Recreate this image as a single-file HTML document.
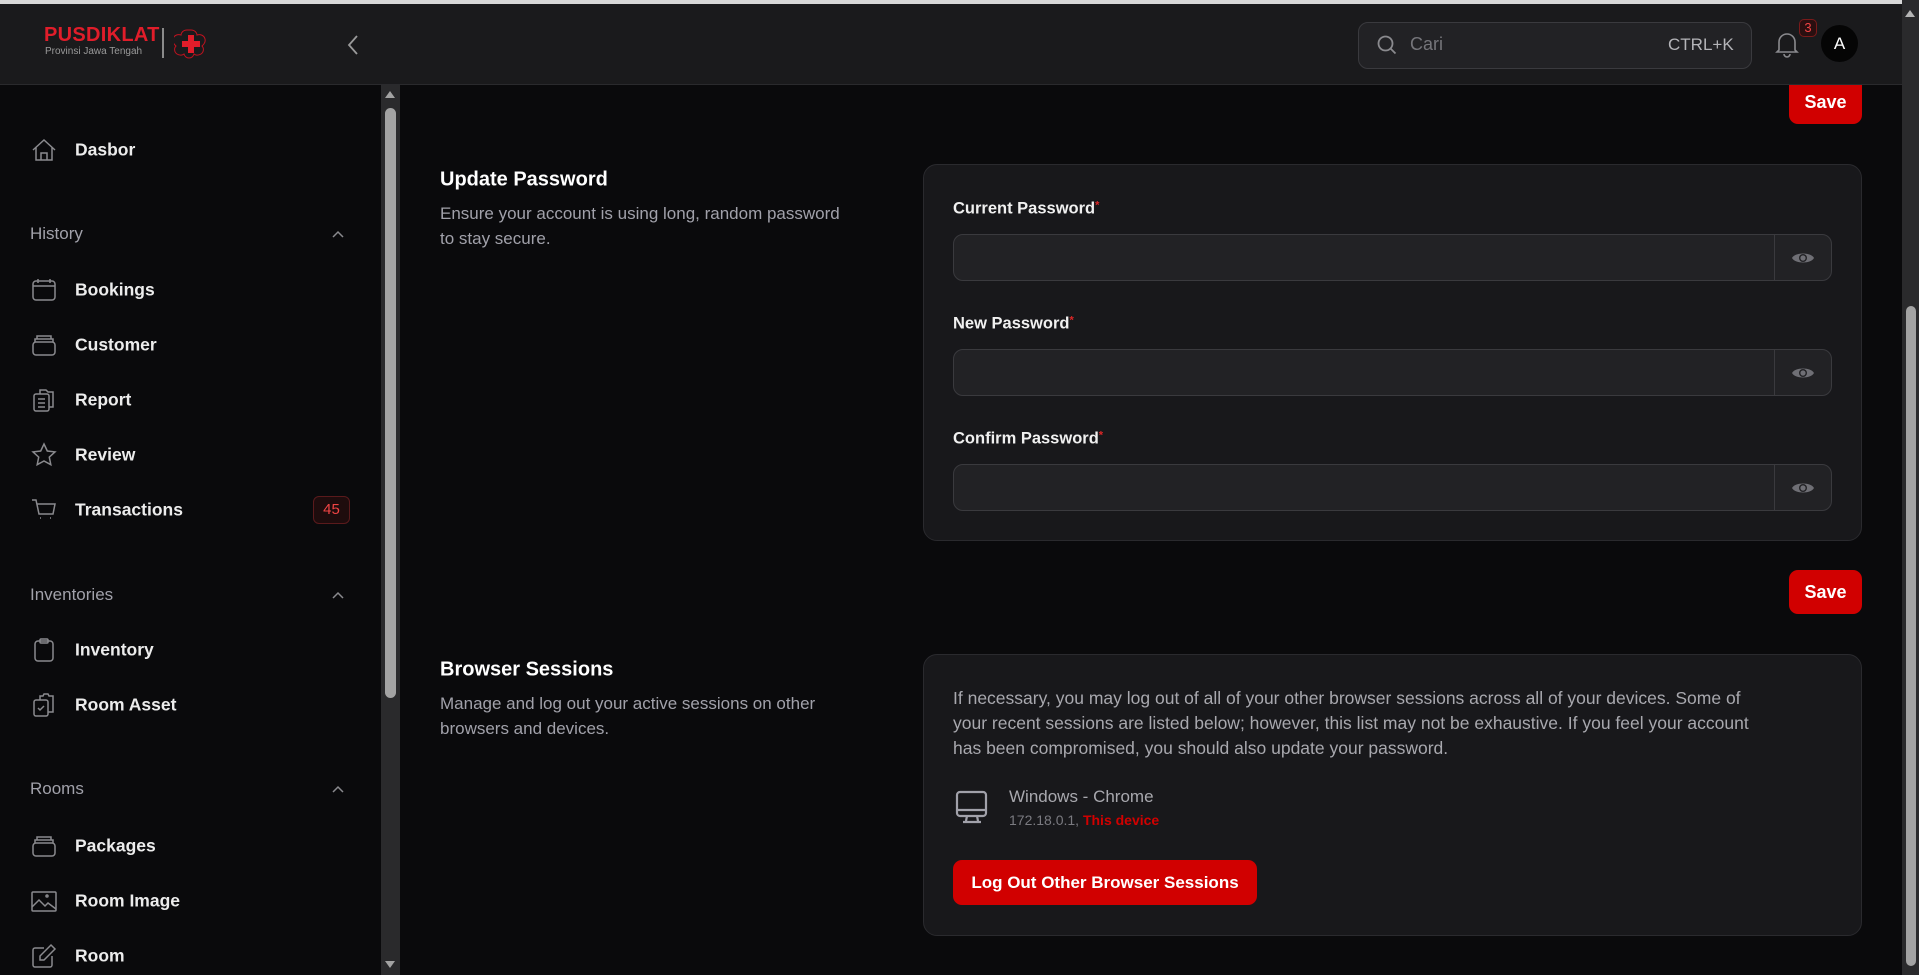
<!DOCTYPE html>
<html><head><meta charset="utf-8"><style>
*{box-sizing:border-box;margin:0;padding:0}
body{width:1919px;height:975px;background:#0a0a0c;font-family:"Liberation Sans",sans-serif;position:relative;overflow:hidden;color:#e5e5e5}
.a{position:absolute}
.topline{left:0;top:0;width:1919px;height:4px;background:#d8d8d8}
.hdr{left:0;top:4px;width:1902px;height:81px;background:#1a1a1c;border-bottom:1px solid #2a2a2d}
.it{position:absolute;left:75px;font-size:17.5px;font-weight:bold;color:#ececec;transform:translateY(-50%)}
.ic{position:absolute;left:31px;width:26px;height:26px;transform:translateY(-50%)}
.sec{position:absolute;left:30px;font-size:17px;color:#a1a1aa;transform:translateY(-50%)}
.chev{position:absolute;left:330px;width:16px;height:16px;transform:translateY(-50%)}
.card{background:#18181b;border:1px solid #2a2a2e;border-radius:14px}
.lbl{position:absolute;left:953px;font-size:16.5px;font-weight:bold;color:#f0f0f0;transform:translateY(-50%)}
.lbl span{color:#dc2626;font-size:11px;vertical-align:top}
.inp{position:absolute;left:953px;width:879px;height:47px;background:#222225;border:1px solid #3a3a3e;border-radius:10px;overflow:hidden}
.inp .eye{position:absolute;right:0;top:0;width:57px;height:100%;border-left:1px solid #3a3a3e;display:flex;align-items:center;justify-content:center}
.btn{position:absolute;background:#d10000;color:#fff;font-weight:bold;font-size:18px;border-radius:9px;display:flex;align-items:center;justify-content:center}
.ttl{position:absolute;left:440px;font-size:20px;font-weight:bold;color:#fff;transform:translateY(-50%)}
.desc{position:absolute;left:440px;font-size:17px;line-height:25px;color:#a1a1aa;white-space:nowrap}
</style></head><body>
<div class="a topline"></div>
<div class="btn" style="left:1789px;top:80px;width:73px;height:44px;border-radius:0 0 9px 9px">Save</div>
<div class="a hdr"></div>
<div class="a" style="left:44px;top:24px;font-size:20px;font-weight:bold;color:#e11d2a;letter-spacing:0.3px">PUSDIKLAT</div>
<div class="a" style="left:45px;top:46px;font-size:10px;color:#9a9a9a">Provinsi Jawa Tengah</div>
<div class="a" style="left:162px;top:28px;width:2px;height:30px;background:#8a8a8a"></div>
<svg class="a" style="left:174px;top:27px" width="34" height="34" viewBox="0 0 34 34"><path d="M17 3c4 0 6 3 6 5 3-1 7 0 8 4s-2 6-3 7c2 2 2 6-1 8s-6 1-7 0c-1 3-3 4-5 4s-4-1-5-4c-1 1-4 2-7 0s-3-6-1-8c-1-1-4-3-3-7s5-5 8-4c0-2 2-5 6-5z" fill="none" stroke="#c1121f" stroke-width="1"/><path d="M14 8h6v6h6v6h-6v6h-6v-6h-6v-6h6z" fill="#e11d2a"/></svg>
<svg class="a" style="left:346px;top:34px" width="14" height="22" viewBox="0 0 14 22"><path d="M11 2L3 11l8 9" fill="none" stroke="#9a9a9a" stroke-width="1.8"/></svg>
<div class="a" style="left:1358px;top:22px;width:394px;height:47px;background:#222225;border:1px solid #3a3a3e;border-radius:10px"></div>
<svg class="a" style="left:1376px;top:34px" width="22" height="22" viewBox="0 0 22 22"><circle cx="9.5" cy="9.5" r="7" fill="none" stroke="#8a8a8e" stroke-width="1.8"/><path d="M14.5 14.5l5 5" stroke="#8a8a8e" stroke-width="1.8"/></svg>
<div class="a" style="left:1410px;top:34px;font-size:18px;color:#75757a">Cari</div>
<div class="a" style="left:1668px;top:35px;font-size:17px;color:#b4b4b8">CTRL+K</div>
<svg class="a" style="left:1774px;top:30px" width="26" height="28" viewBox="0 0 26 28"><path d="M5 20V12a8 8 0 0116 0v8l2 2H3z" fill="none" stroke="#8a8a8e" stroke-width="1.6"/><path d="M10 24a3 3 0 006 0" fill="none" stroke="#8a8a8e" stroke-width="1.6"/></svg>
<div class="a" style="left:1799px;top:19px;width:18px;height:18px;border:1px solid #7a1a1a;background:#2a0f10;border-radius:5px;color:#ef4444;font-size:13px;text-align:center;line-height:16px">3</div>
<div class="a" style="left:1821px;top:25px;width:37px;height:37px;border-radius:50%;background:#050505;color:#fff;font-size:17px;text-align:center;line-height:37px">A</div>

<svg class="ic" style="top:150px" viewBox="0 0 26 26" fill="none" stroke="#8a8a8e" stroke-width="1.5"><path d="M2 13L13 3l11 10M5 10v13h16V10M10 23v-7h6v7"/></svg>
<div class="it" style="top:150px">Dasbor</div>
<div class="sec" style="top:234px">History</div>
<svg class="chev" style="top:234px" viewBox="0 0 16 16"><path d="M3 11l5-5 5 5" fill="none" stroke="#8a8a8e" stroke-width="1.5"/></svg>
<svg class="ic" style="top:290px" viewBox="0 0 26 26" fill="none" stroke="#8a8a8e" stroke-width="1.5"><rect x="2" y="4" width="22" height="19" rx="3"/><path d="M2 9h22M7 2v4M19 2v4"/></svg>
<div class="it" style="top:290px">Bookings</div>
<svg class="ic" style="top:345px" viewBox="0 0 26 26" fill="none" stroke="#8a8a8e" stroke-width="1.5"><rect x="2" y="10" width="22" height="13" rx="3"/><path d="M4 10V7h18v3M6 7V4h14v3"/></svg>
<div class="it" style="top:345px">Customer</div>
<svg class="ic" style="top:400px" viewBox="0 0 26 26" fill="none" stroke="#8a8a8e" stroke-width="1.5"><rect x="3" y="7" width="15" height="17" rx="2"/><path d="M9 7V3h6l2 2h5v15h-4M7 12h7M7 16h7M7 20h7"/></svg>
<div class="it" style="top:400px">Report</div>
<svg class="ic" style="top:455px" viewBox="0 0 26 26" fill="none" stroke="#8a8a8e" stroke-width="1.5"><path d="M13 2l3.3 7 7.7.9-5.7 5.2 1.5 7.6L13 19l-6.8 3.7 1.5-7.6L2 9.9 9.7 9z"/></svg>
<div class="it" style="top:455px">Review</div>
<svg class="ic" style="top:510px" viewBox="0 0 26 26" fill="none" stroke="#8a8a8e" stroke-width="1.5"><path d="M1 3h4l3 14h14l2-10H6M9 21h1M19 21h1"/></svg>
<div class="it" style="top:510px">Transactions</div>
<div class="a" style="left:313px;top:496px;width:37px;height:28px;border:1px solid #5a1a1c;background:#1e0c0d;border-radius:6px;color:#ef4444;font-size:15px;text-align:center;line-height:26px">45</div>
<div class="sec" style="top:595px">Inventories</div>
<svg class="chev" style="top:595px" viewBox="0 0 16 16"><path d="M3 11l5-5 5 5" fill="none" stroke="#8a8a8e" stroke-width="1.5"/></svg>
<svg class="ic" style="top:650px" viewBox="0 0 26 26" fill="none" stroke="#8a8a8e" stroke-width="1.5"><rect x="4" y="4" width="18" height="20" rx="3"/><rect x="9" y="2" width="8" height="4" rx="1"/></svg>
<div class="it" style="top:650px">Inventory</div>
<svg class="ic" style="top:705px" viewBox="0 0 26 26" fill="none" stroke="#8a8a8e" stroke-width="1.5"><rect x="3" y="8" width="14" height="16" rx="2"/><path d="M9 8V4h3l1-2h4l1 2h4v16h-5M7 16l2 2 4-4"/></svg>
<div class="it" style="top:705px">Room Asset</div>
<div class="sec" style="top:789px">Rooms</div>
<svg class="chev" style="top:789px" viewBox="0 0 16 16"><path d="M3 11l5-5 5 5" fill="none" stroke="#8a8a8e" stroke-width="1.5"/></svg>
<svg class="ic" style="top:846px" viewBox="0 0 26 26" fill="none" stroke="#8a8a8e" stroke-width="1.5"><rect x="2" y="10" width="22" height="13" rx="3"/><path d="M4 10V7h18v3M6 7V4h14v3"/></svg>
<div class="it" style="top:846px">Packages</div>
<svg class="ic" style="top:901px" viewBox="0 0 26 26" fill="none" stroke="#8a8a8e" stroke-width="1.5"><rect x="1" y="4" width="24" height="19" rx="1"/><path d="M1 19l7-7 6 6 3-3 8 6"/><circle cx="16" cy="8" r="1"/></svg>
<div class="it" style="top:901px">Room Image</div>
<svg class="ic" style="top:956px" viewBox="0 0 26 26" fill="none" stroke="#8a8a8e" stroke-width="1.5"><path d="M13 5H4a2 2 0 00-2 2v15a2 2 0 002 2h15a2 2 0 002-2v-9M20 2l4 4-11 11H9v-4z"/></svg>
<div class="it" style="top:956px">Room</div>
<div class="a" style="left:381px;top:85px;width:19px;height:890px;background:#2a2a2c"></div>
<div class="a" style="left:385px;top:108px;width:11px;height:590px;background:#a3a3a3;border-radius:6px"></div>
<svg class="a" style="left:383px;top:89px" width="14" height="10"><path d="M2 9l5-7 5 7z" fill="#a3a3a3"/></svg>
<svg class="a" style="left:383px;top:960px" width="14" height="10"><path d="M2 1l5 7 5-7z" fill="#a3a3a3"/></svg>

<div class="a" style="left:1902px;top:0;width:17px;height:975px;background:#2a2a2c"></div>
<div class="a" style="left:1906px;top:306px;width:10px;height:660px;background:#a3a3a3;border-radius:5px"></div>
<svg class="a" style="left:1903px;top:8px" width="14" height="10"><path d="M2 9l5-7 5 7z" fill="#b5b5b5"/></svg>

<div class="ttl" style="top:180px">Update Password</div>
<div class="desc" style="top:201px">Ensure your account is using long, random password<br>to stay secure.</div>
<div class="a card" style="left:923px;top:164px;width:939px;height:377px"></div>
<div class="lbl" style="top:209px">Current Password<span>*</span></div>
<div class="inp" style="top:234px"><div class="eye"><svg width="24" height="16" viewBox="0 0 24 16"><path d="M1 8C4 2 20 2 23 8 20 14 4 14 1 8z" fill="#6f6f75"/><circle cx="12" cy="8" r="4" fill="#222225"/><circle cx="12" cy="8" r="2.6" fill="#6f6f75"/></svg></div></div>
<div class="lbl" style="top:324px">New Password<span>*</span></div>
<div class="inp" style="top:349px"><div class="eye"><svg width="24" height="16" viewBox="0 0 24 16"><path d="M1 8C4 2 20 2 23 8 20 14 4 14 1 8z" fill="#6f6f75"/><circle cx="12" cy="8" r="4" fill="#222225"/><circle cx="12" cy="8" r="2.6" fill="#6f6f75"/></svg></div></div>
<div class="lbl" style="top:439px">Confirm Password<span>*</span></div>
<div class="inp" style="top:464px"><div class="eye"><svg width="24" height="16" viewBox="0 0 24 16"><path d="M1 8C4 2 20 2 23 8 20 14 4 14 1 8z" fill="#6f6f75"/><circle cx="12" cy="8" r="4" fill="#222225"/><circle cx="12" cy="8" r="2.6" fill="#6f6f75"/></svg></div></div>
<div class="btn" style="left:1789px;top:570px;width:73px;height:44px">Save</div>

<div class="ttl" style="top:670px">Browser Sessions</div>
<div class="desc" style="top:691px">Manage and log out your active sessions on other<br>browsers and devices.</div>
<div class="a card" style="left:923px;top:654px;width:939px;height:282px"></div>
<div class="a" style="left:953px;top:686px;font-size:17.5px;line-height:25px;color:#a8a8ae;white-space:nowrap">If necessary, you may log out of all of your other browser sessions across all of your devices. Some of<br>your recent sessions are listed below; however, this list may not be exhaustive. If you feel your account<br>has been compromised, you should also update your password.</div>
<svg class="a" style="left:955px;top:790px" width="34" height="35" viewBox="0 0 34 35" fill="none" stroke="#a1a1aa" stroke-width="2.2"><rect x="2" y="2" width="29" height="24" rx="3"/><path d="M2 20h29M12 26l-1 5M22 26l1 5M8 32h18"/></svg>
<div class="a" style="left:1009px;top:787px;font-size:17px;color:#a8a8ae">Windows - Chrome</div>
<div class="a" style="left:1009px;top:812px;font-size:14px;color:#7a7a80">172.18.0.1, <span style="color:#d10000;font-weight:bold">This device</span></div>
<div class="btn" style="left:953px;top:860px;width:304px;height:45px;font-size:17px">Log Out Other Browser Sessions</div>
</body></html>
